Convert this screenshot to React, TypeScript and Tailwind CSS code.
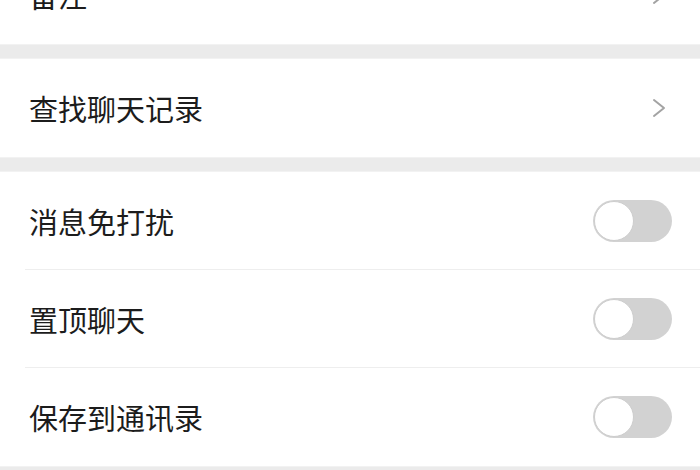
import type { ReactNode } from "react";

const FONT = "font-['Noto_Sans_CJK_SC','Noto_Sans',sans-serif]";

function Chevron() {
  return (
    <svg width="16" height="20" viewBox="0 0 16 20" className="mr-[33px]">
      <polyline
        points="3,2 13,10 3,18"
        fill="none"
        stroke="#a3a3a3"
        strokeWidth="2"
        strokeLinecap="round"
        strokeLinejoin="round"
      />
    </svg>
  );
}

function Toggle() {
  return (
    <div className="mr-[28px] flex h-[42px] w-[79px] items-center rounded-full bg-[#d2d2d2] p-[1px]">
      <div className="size-[40px] rounded-full border border-[#cdcdcd] bg-white" />
    </div>
  );
}

function Row({ label, right, divider }: { label: string; right: ReactNode; divider?: boolean }) {
  return (
    <div className="relative flex h-[98px] items-center justify-between pl-[29px]">
      <span className="text-[29px] leading-none text-[#1c1c1c]">{label}</span>
      {right}
      {divider && <div className="absolute bottom-0 left-[25px] right-0 h-px bg-[#eeeeee]" />}
    </div>
  );
}

function Band() {
  return <div className="h-[15px] border-y border-[#f2f2f2] bg-[#ebebeb]" />;
}

export default function App() {
  return (
    <div className={`h-[470px] w-[700px] overflow-hidden bg-white ${FONT}`}>
      <div className="-mt-[54px]">
        <Row label="备注" right={<Chevron />} />
        <Band />
        <Row label="查找聊天记录" right={<Chevron />} />
        <Band />
        <Row label="消息免打扰" right={<Toggle />} divider />
        <Row label="置顶聊天" right={<Toggle />} divider />
        <Row label="保存到通讯录" right={<Toggle />} />
        <Band />
      </div>
    </div>
  );
}
